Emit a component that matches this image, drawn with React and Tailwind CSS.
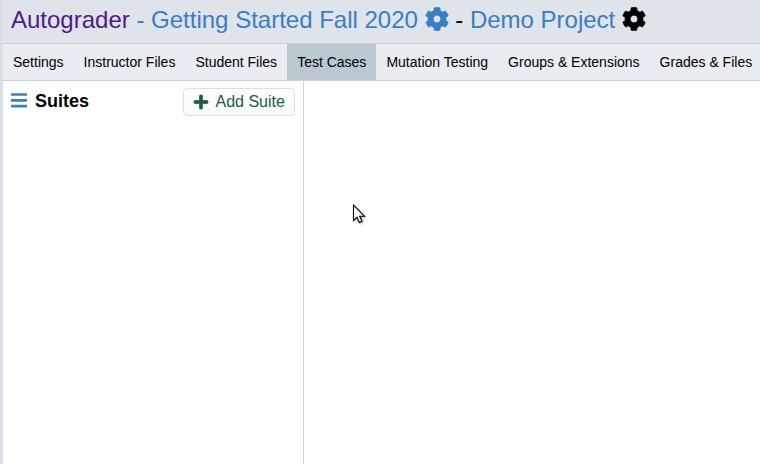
import { FaCog, FaPlus } from "react-icons/fa";

const tabs = [
  "Settings",
  "Instructor Files",
  "Student Files",
  "Test Cases",
  "Mutation Testing",
  "Groups & Extensions",
  "Grades & Files",
];

function Header() {
  return (
    <header className="flex h-[43px] shrink-0 items-center bg-[#dfe3ea] pb-[3px] pl-2 text-2xl whitespace-pre text-[#377fc4]">
      <span className="text-[#4f1a8b]">Autograder</span>
      <span> - Getting Started Fall 2020 </span>
      <FaCog className="mt-[-2px] size-6 stroke-[14px]" />
      <span className="text-black"> - </span>
      <span>Demo Project </span>
      <FaCog className="mt-[-2px] size-6 stroke-[14px] text-black" />
    </header>
  );
}

function Nav({ active }) {
  return (
    <nav className="flex h-[38px] shrink-0 border-y border-[#c8d2d7] bg-[#e9ecf1] text-sm text-black">
      {tabs.map((tab) => (
        <div
          key={tab}
          className={`flex shrink-0 items-center px-[10px] whitespace-nowrap ${tab === active ? "bg-[#bbc8d0]" : ""}`}
        >
          {tab}
        </div>
      ))}
    </nav>
  );
}

function MenuIcon() {
  return (
    <svg className="mt-[5px] h-[15px] w-4 text-[#377fc4]" viewBox="0 0 16 15" fill="currentColor">
      <rect y="0.2" width="16" height="2.6" rx="0.5" />
      <rect y="6.1" width="16" height="2.6" rx="0.5" />
      <rect y="11.8" width="16" height="2.6" rx="0.5" />
    </svg>
  );
}

function Sidebar() {
  return (
    <aside className="w-[301px] shrink-0 border-r border-[#ccd6da]">
      <div className="flex items-start pt-[7px] pr-2 pl-2">
        <MenuIcon />
        <h2 className="ml-2 text-lg leading-[26px] font-bold text-black">Suites</h2>
        <button className="ml-auto flex h-7 w-28 items-center rounded-[4px] border border-[#d8e0e5] bg-linear-to-b from-white to-[#f5fbfa] pl-[9px] text-base text-[#1f5a3f]">
          <FaPlus className="mt-[-1px] mr-[6.5px] size-4 stroke-[22px]" />
          Add Suite
        </button>
      </div>
    </aside>
  );
}

function Cursor() {
  return (
    <svg
      className="absolute top-[204px] left-[349px] drop-shadow-[1px_1px_1px_rgba(0,0,0,0.35)]"
      width="14"
      height="20"
      viewBox="0 0 14 20"
    >
      <path
        d="M1.5 1.2V16.4L5 13.2L7.4 18.4L10 17.2L7.6 12.2H12.4Z"
        fill="white"
        stroke="black"
        strokeWidth="1.1"
      />
    </svg>
  );
}

export default function App() {
  return (
    <div className="relative flex h-[464px] w-[760px] flex-col overflow-hidden border-l-[3px] border-[#dadee6] bg-white font-['Liberation_Sans',Arial,sans-serif]">
      <Header />
      <Nav active="Test Cases" />
      <main className="flex flex-1">
        <Sidebar />
      </main>
      <Cursor />
    </div>
  );
}
